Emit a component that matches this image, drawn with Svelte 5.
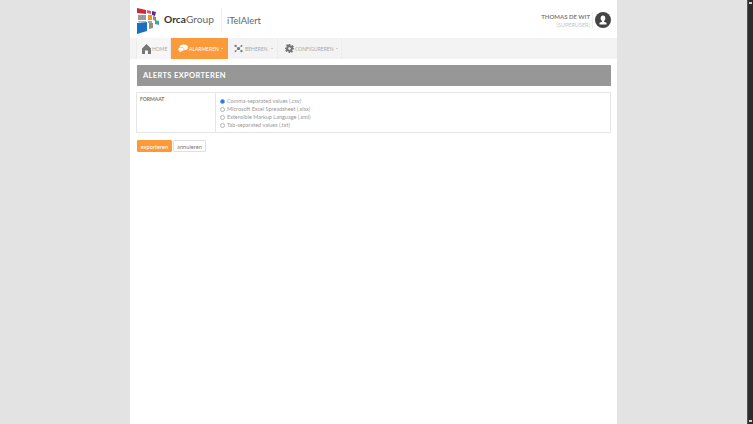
<script>
  const formats = [
    'Comma-separated values (.csv)',
    'Microsoft Excel Spreadsheet (.xlsx)',
    'Extensible Markup Language (.xml)',
    'Tab-separated values (.txt)'
  ];
</script>

<div class="viewport">
  <div class="desk">
    <main class="page">
      <header class="top">
        <div class="brand">
          <svg class="logo" width="23" height="27" viewBox="0 0 23 27" aria-hidden="true">
            <path d="M0 1l9 2v4L0 6z" fill="#d2283c"/>
            <path d="M10 3l4 1v3l-4-1z" fill="#e0525f"/>
            <path d="M15 4l4 1-1 4-3-1z" fill="#5b2d8c"/>
            <path d="M1 8h8v5H1z" fill="#9a9a9a"/>
            <path d="M11 8h4v5h-4z" fill="#f7941e"/>
            <path d="M16 9l3 1v4l-3-1z" fill="#8a8a8a"/>
            <path d="M1 14h8v1H1z" fill="#b5b5b5"/>
            <path d="M11 14h4v2h-4z" fill="#a8a8a8"/>
            <path d="M18 13l4 1v4l-4-1z" fill="#3aa7a0"/>
            <path d="M0 16l10-1v9l-10 3z" fill="#1b6fbf"/>
            <path d="M12 16h4v5l-4 1z" fill="#8f8f8f"/>
          </svg>
          <span class="orca"><b>Orca</b>Group</span>
          <span class="app">iTelAlert</span>
        </div>
        <div class="user">
          <div class="who">
            <strong>THOMAS DE WIT</strong>
            <small>(SUPERUSER)</small>
          </div>
          <span class="avatar">
            <svg width="16" height="16" viewBox="0 0 16 16" aria-hidden="true">
              <ellipse cx="8" cy="6.300" rx="2.300" ry="2.800" fill="#fff"/>
              <path d="M7 8.500h2v1.300l2.500 1v1.700h-7v-1.700l2.500-1z" fill="#fff"/>
            </svg>
          </span>
        </div>
      </header>

      <nav class="nav">
        <span class="item home">
          <svg width="9" height="10" viewBox="0 0 9 10" aria-hidden="true"><path d="M4.500 0L9 4.500V10H6V6.500H3V10H0V4.500z" fill="#777"/></svg>
          HOME
        </span>
        <span class="item active">
          <svg width="10" height="9" viewBox="0 0 13 11" aria-hidden="true"><ellipse cx="7.500" cy="4" rx="5.500" ry="3.800" fill="#fff"/><ellipse cx="4" cy="6.500" rx="4" ry="2.700" fill="#fff" stroke="#fa9a3b" stroke-width=".7"/><path d="M2 8l-.5 2.500L5 9z" fill="#fff"/></svg>
          ALARMEREN<i class="caret"></i>
        </span>
        <span class="item beheren">
          <svg width="9" height="9" viewBox="0 0 12 11" aria-hidden="true"><g stroke="#999" stroke-width=".8"><path d="M2 2l4 3.500M10 2L6 5.500M2 9l4-3.500M10 9L6 5.500"/></g><circle cx="6" cy="5.500" r="2" fill="#777"/><circle cx="2" cy="2" r="1.500" fill="#777"/><circle cx="10" cy="2" r="1.200" fill="#777"/><circle cx="2" cy="9" r="1.200" fill="#777"/><circle cx="10" cy="9" r="1.500" fill="#777"/></svg>
          BEHEREN <i class="caret"></i>
        </span>
        <span class="item config">
          <svg width="9" height="9" viewBox="0 0 11 11" aria-hidden="true"><path d="M4.500 0h2l.3 1.700 1.200.5L9.400 1.200l1.400 1.400-1 1.400.5 1.200L11 4.500v2l-1.700.3-.5 1.200 1 1.400-1.400 1.400-1.400-1-1.200.5L6.500 11h-2l-.3-1.700-1.200-.5-1.400 1L.2 8.400l1-1.400-.5-1.200L0 6.500v-2l1.700-.3.500-1.200-1-1.400L2.600.2 4 1.200l.2-.1z" fill="#777"/><circle cx="5.500" cy="5.500" r="1.500" fill="#f3f3f3"/></svg>
          CONFIGUREREN <i class="caret"></i>
        </span>
      </nav>

      <section class="content">
        <h1>ALERTS EXPORTEREN</h1>
        <div class="panel">
          <div class="label">FORMAAT</div>
          <div class="options">
            {#each formats as f, i}
              <label class="opt"><input type="radio" name="format" checked={i === 0} />{f}</label>
            {/each}
          </div>
        </div>
        <div class="actions">
          <button class="primary">exporteren</button>
          <button class="plain">annuleren</button>
        </div>
      </section>
    </main>
  </div>
  <aside class="scrollbar">
    <span class="up"></span>
    <span class="down"></span>
  </aside>
</div>

<style>
  :global(body) {
    margin: 0;
    background: #e3e3e3;
    overflow: hidden;
  }
  .viewport {
    display: flex;
    height: 424px;
    width: 753px;
    font-family: Lato, "Open Sans", sans-serif;
  }
  .desk {
    flex: 1;
    display: flex;
    justify-content: center;
    background: #e3e3e3;
  }
  .page {
    width: 487px;
    height: 424px;
    background: #fff;
    display: flex;
    flex-direction: column;
  }
  .top {
    height: 36px;
    padding: 2px 6px 0 7px;
    display: flex;
    align-items: center;
    justify-content: space-between;
  }
  .brand {
    display: flex;
    align-items: center;
  }
  .logo { margin-right: 4px; }
  .orca {
    font-size: 10.200px;
    color: #666;
    padding-right: 7px;
    margin-right: 5px;
    height: 25px;
    line-height: 23px;
    border-right: 1px solid #eee;
  }
  .orca b { color: #333; }
  .app {
    font-size: 9.400px;
    color: #666;
  }
  .user {
    display: flex;
    align-items: center;
    gap: 2px;
  }
  .who {
    display: flex;
    flex-direction: column;
    align-items: flex-end;
    line-height: 8px;
    border-right: 1px solid #eee;
    padding: 1px 2px 0 0;
  }
  .who strong { font-size: 6px; color: #808080; }
  .who small { font-size: 5.500px; color: #c4c4c4; }
  .avatar {
    width: 16px;
    height: 16px;
    border-radius: 50%;
    background: #444;
    display: flex;
    align-items: center;
    justify-content: center;
    overflow: hidden;
  }
  .nav {
    height: 21px;
    background: #f3f3f3;
    padding-left: 6px;
    display: flex;
    align-items: stretch;
  }
  .item {
    display: flex;
    align-items: center;
    gap: 1px;
    box-sizing: border-box;
    font-size: 5px;
    color: #aaa;
    border-right: 1px solid #ececec;
    white-space: nowrap;
  }
  .home {
    width: 35px;
    padding-left: 5px;
    border-left: 1px solid #ececec;
    background: #f6f6f6;
  }
  .item.active {
    width: 57px;
    padding-left: 7px;
    background: #fa9a3b;
    color: #fff;
    border-color: #fa9a3b;
  }
  .beheren {
    width: 50px;
    padding-left: 6px;
    gap: 2px;
  }
  .config {
    width: 64px;
    padding-left: 7px;
  }
  .caret {
    display: inline-block;
    width: 0;
    height: 0;
    margin-left: 1px;
    border-left: 1.500px solid transparent;
    border-right: 1.500px solid transparent;
    border-top: 1.500px solid currentColor;
  }
  .content {
    padding: 6px 6px 0 7px;
  }
  h1 {
    margin: 0;
    height: 21px;
    line-height: 21px;
    padding-left: 6px;
    background: #979797;
    color: #fff;
    font-size: 7.500px;
    font-weight: 700;
    letter-spacing: .35px;
  }
  .panel {
    margin: 6px 0 0 -1px;
    display: flex;
    height: 41px;
    border: 1px solid #e6e6e6;
    box-sizing: border-box;
  }
  .label {
    width: 79px;
    border-right: 1px solid #e6e6e6;
    font-size: 5px;
    font-weight: 700;
    color: #777;
    padding: 3px 0 0 3px;
    box-sizing: border-box;
    line-height: 7px;
  }
  .options {
    flex: 1;
    padding: 4px 0 0 4px;
    display: flex;
    flex-direction: column;
  }
  .opt {
    height: 8px;
    display: flex;
    align-items: center;
    font-size: 5.500px;
    color: #999;
  }
  .opt input {
    appearance: none;
    box-sizing: border-box;
    width: 5px;
    height: 5px;
    margin: 0 2px 0 0;
    border: 1px solid #b4b4b4;
    border-radius: 50%;
    background: #fff;
  }
  .opt input:checked {
    background: #1a73e8;
    border-color: #7aa7e0;
  }
  .actions {
    margin-top: 7px;
    display: flex;
    gap: 1px;
  }
  button {
    font-family: inherit;
    font-size: 5.700px;
    height: 12px;
    padding: 0;
    border-radius: 1px;
  }
  .primary {
    width: 35px;
    background: #fa9a3b;
    border: 1px solid #fa9a3b;
    color: #fff;
  }
  .plain {
    width: 33px;
    background: #fff;
    border: 1px solid #e0e0e0;
    color: #777;
  }
  .scrollbar {
    width: 6px;
    background: #2c2c2c;
    border-left: 1px solid #555;
    box-sizing: border-box;
    display: flex;
    flex-direction: column;
    justify-content: space-between;
    padding: 2px 1px;
  }
  .scrollbar span {
    width: 3px;
    height: 2px;
    background: #cfcfcf;
  }
</style>
